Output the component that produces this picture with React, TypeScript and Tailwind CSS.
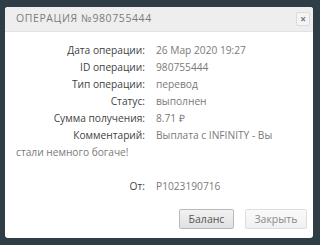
import type { FC } from 'react';

const rows: [string, string][] = [
  ['Дата операции:', '26 Мар 2020 19:27'],
  ['ID операции:', '980755444'],
  ['Тип операции:', 'перевод'],
  ['Статус:', 'выполнен'],
  ['Сумма получения:', '8.71 ₽'],
  ['Комментарий:', 'Выплата с INFINITY - Вы'],
];

const Row: FC<{ label: string; value: string }> = ({ label, value }) => (
  <div className="flex">
    <span className="w-[129px] mr-[11px] text-right text-[#3f3f3f]">{label}</span>
    <span className="text-[#7a7a7a]">{value}</span>
  </div>
);

const App: FC = () => {
  return (
    <div className="w-[320px] h-[245px] bg-[#2f3e46] pt-[7px] pl-[5px] font-['Open_Sans',sans-serif]">
      <div className="w-[308px] h-[231px] rounded-[3px] bg-white overflow-hidden flex flex-col">
        <div className="h-[25px] bg-[#eeeeee] flex items-center justify-between pl-[11px] pr-[3px] border-b border-[#e2e2e2]">
          <span className="text-[10.5px] uppercase tracking-[0.6px] text-[#7b7b7b]">Операция №980755444</span>
          <button className="w-[14px] h-[14px] flex items-center justify-center rounded-[2px] border border-[#dcdcdc] bg-[#f4f4f4] text-[#777] text-[10px] font-bold leading-none">
            ×
          </button>
        </div>
        <div className="flex-1 pl-[11px] pt-[10px] text-[10.2px] leading-[17px]">
          {rows.map(([label, value]) => <Row key={label} label={label} value={value}/>)}
          {/* comment continues on the next line from the left edge */}
          <div className="text-[#7a7a7a]">стали немного богаче!</div>
          <div className="mt-[17px]">
            <Row label="От:" value="P1023190716"/>
          </div>
          <div className="flex justify-end gap-[11px] mt-[14px] pr-[6px]">
            <button className="w-[55px] h-[20px] rounded-[2px] border border-[#b9b9b9] bg-gradient-to-b from-[#f2f2f2] to-[#e0e0e0] text-[#555] text-[10.5px]">
              Баланс
            </button>
            <button className="w-[62px] h-[20px] rounded-[2px] border border-[#dedede] bg-gradient-to-b from-[#fafafa] to-[#f0f0f0] text-[#8a8a8a] text-[10.5px]">
              Закрыть
            </button>
          </div>
        </div>
      </div>
    </div>
  );
};

export default App
